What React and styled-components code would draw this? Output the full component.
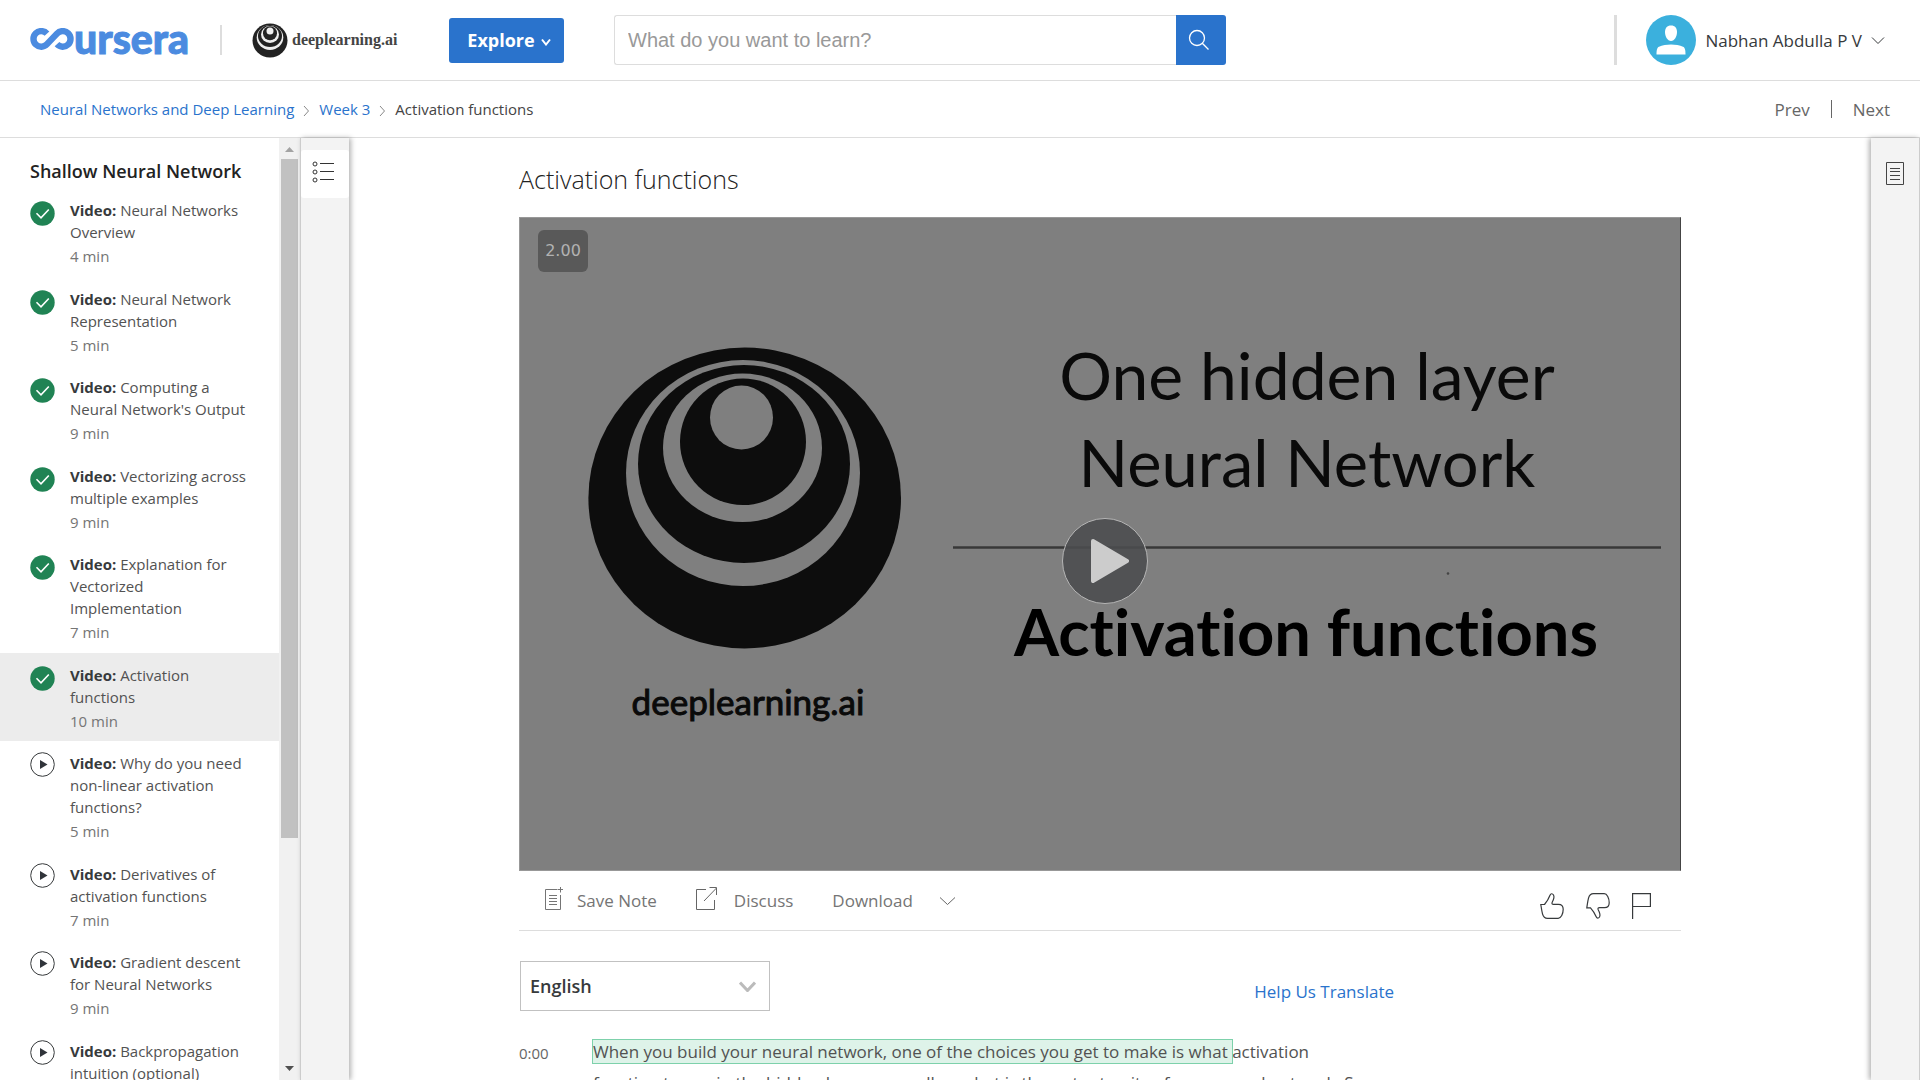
import React from 'react';
import styled, { createGlobalStyle, css } from 'styled-components';

const sans = `'Open Sans', 'Noto Sans', sans-serif`;
const blue = '#2a73cc';

const GlobalStyle = createGlobalStyle`
  *, *::before, *::after { box-sizing: border-box; }
  body { margin: 0; background: #fff; color: #373a3c; font-family: ${sans}; font-size: 15px; }
  button, input, select { font: inherit; margin: 0; }
  button { cursor: pointer; }
  a { text-decoration: none; color: inherit; }
  ul, ol { margin: 0; padding: 0; list-style: none; }
  h1, h2, p { margin: 0; }
  svg { display: block; flex: none; }
`;

const Page = styled.div`
  display: flex;
  flex-direction: column;
  height: 100vh;
  overflow: hidden;
`;

/* Header */
const Header = styled.header`
  display: flex;
  align-items: center;
  flex: none;
  height: 81px;
  padding: 0 35px 0 30px;
  border-bottom: 1px solid #ddd;
`;

const Brand = styled.a`
  display: flex;
  align-items: center;
  width: 160px;
  height: 44px;
  margin-right: 30px;
  padding-bottom: 3px;
  color: #4b8be0;
  font: 900 41px/44px Lato, ${sans};
  -webkit-text-stroke: 1px currentColor;
`;

const Rule = styled.span`
  flex: none;
  width: ${(p) => p.$width}px;
  height: ${(p) => p.$height}px;
  background: ${(p) => p.$color || '#ddd'};
`;

const Partner = styled.a`
  display: flex;
  align-items: center;
  gap: 4px;
  width: 167px;
  margin: 0 30px;
  color: #444;
  font: 700 16px/34px 'Liberation Serif', serif;
`;

const ExploreButton = styled.button`
  display: flex;
  align-items: center;
  justify-content: center;
  gap: 6px;
  width: 115px;
  height: 45px;
  padding: 0 0 0 5px;
  border: 0;
  border-radius: 3px;
  background: ${blue};
  color: #fff;
  font-size: 18px;
  font-weight: 700;
  svg { margin-top: 3px; }
`;

const Search = styled.form`
  display: flex;
  width: 612px;
  height: 50px;
  margin-left: 50px;
`;

const SearchInput = styled.input`
  flex: 1;
  min-width: 0;
  padding: 0 13px;
  border: 1px solid #ddd;
  border-right: 0;
  border-radius: 3px 0 0 3px;
  font-family: 'Liberation Sans', sans-serif;
  font-size: 20px;
  &::placeholder { color: #999; opacity: 1; }
`;

const SearchButton = styled.button`
  display: grid;
  place-items: center;
  width: 50px;
  padding: 0 4px 0 0;
  border: 0;
  border-radius: 0 3px 3px 0;
  background: ${blue};
`;

const Account = styled.button`
  display: flex;
  align-items: center;
  gap: 9px;
  margin-left: 29px;
  padding: 0;
  border: 0;
  background: none;
  color: #373a3c;
  font-size: 17px;
`;

const Spacer = styled.span`
  flex: 1;
`;

/* Breadcrumb bar */
const CrumbBar = styled.div`
  display: flex;
  align-items: center;
  justify-content: space-between;
  flex: none;
  height: 57px;
  padding: 0 30px 0 40px;
  border-bottom: 1px solid #ddd;
`;

const Crumbs = styled.ol`
  display: flex;
  align-items: center;
  gap: 9px;
  color: #444;
  a { color: ${blue}; }
  svg { margin-top: 3px; }
`;

const Pager = styled.nav`
  display: flex;
  align-items: center;
  gap: 21px;
  color: #666;
  font-size: 17px;
`;

/* Body */
const Body = styled.div`
  display: flex;
  flex: 1;
  min-height: 0;
`;

const Sidebar = styled.aside`
  width: 279px;
  flex: none;
  overflow: hidden;
`;

const SidebarTitle = styled.h2`
  padding: 20px 30px 4px;
  color: #222;
  font-size: 18px;
  font-weight: 600;
  line-height: 26px;
  white-space: nowrap;
`;

const Lesson = styled.a`
  display: flex;
  gap: 15px;
  padding: 11px 30px 9px;
  background: ${(p) => (p.$active ? '#ececec' : 'transparent')};
  line-height: 22px;
  color: #525252;
  svg { margin-top: ${(p) => (p.$done ? 2 : 0)}px; }
  strong { color: #373a3c; font-weight: 700; }
`;

const Duration = styled.span`
  display: block;
  margin-top: 2px;
  color: #757575;
  line-height: 1.5;
`;

const Scrollbar = styled.div`
  display: flex;
  flex-direction: column;
  align-items: center;
  justify-content: space-between;
  flex: none;
  width: 21px;
  padding: 9px 0;
  background: #f1f1f1;
`;

const Thumb = styled.span`
  width: 17px;
  height: 73.5%;
  margin: 7px 0 auto;
  background: #c1c1c1;
`;

const Rail = styled.div`
  flex: none;
  position: relative;
  width: 49px;
  padding-top: 12px;
  background: #f3f3f3;
  ${(p) =>
    p.$side === 'left'
      ? css`
          border-left: 1px solid #ccc;
          box-shadow: 2px 0 5px rgba(0, 0, 0, 0.3);
        `
      : css`
          border-right: 1px solid #ccc;
          box-shadow: -2px 0 5px rgba(0, 0, 0, 0.3);
        `}
`;

const RailButton = styled.button`
  display: grid;
  place-items: center;
  width: 48px;
  height: 48px;
  padding: ${(p) => (p.$active ? '0 4px 4px 0' : '0 0 2px')};
  border: 0;
  border-radius: 3px;
  background: ${(p) => (p.$active ? '#fff' : 'transparent')};
`;

const Main = styled.main`
  flex: 1;
  min-width: 0;
  padding: 22px 190px 0 170px;
  overflow: hidden;
`;

const Title = styled.h1`
  margin-bottom: 19px;
  color: #222;
  font-size: 25px;
  font-weight: 300;
  line-height: 38px;
`;

const Player = styled.section`
  position: relative;
  aspect-ratio: 1162 / 654;
  border: 1px solid #989898;
  border-right-color: #444;
  background: #7f7f7f;
  overflow: hidden;
`;

const Slide = styled.svg`
  width: 100%;
  height: 100%;
  font-family: Lato, ${sans};
  font-variant-ligatures: none;
`;

const SpeedBadge = styled.span`
  position: absolute;
  top: 12px;
  left: 18px;
  width: 50px;
  border-radius: 6px;
  background: #595959;
  color: #b2b2b2;
  font: 16px/42px 'DejaVu Sans', sans-serif;
  text-align: center;
`;

const PlayButton = styled.button`
  position: absolute;
  top: calc(50% + 17px);
  left: calc(50% + 5px);
  display: grid;
  place-items: center;
  width: 86px;
  height: 86px;
  margin: -43px;
  padding: 0 0 0 9px;
  border: 1px solid #b5b5b5;
  border-radius: 50%;
  background: rgba(75, 76, 78, 0.88);
`;

const Actions = styled.div`
  display: flex;
  align-items: center;
  height: 60px;
  padding: 0 30px 0 26px;
  border-bottom: 1px solid #ddd;
`;

const Action = styled.button`
  display: flex;
  align-items: center;
  gap: ${(p) => p.$gap}px;
  margin-right: 39px;
  padding: 0;
  border: 0;
  background: none;
  color: #757575;
  font-size: 17px;
  line-height: 24px;
  svg:first-child { margin-bottom: 5px; }
`;

const Feedback = styled.div`
  display: flex;
  gap: 22px;
  margin-left: auto;
  padding-top: 10px;
`;

const IconButton = styled.button`
  padding: 0;
  border: 0;
  background: none;
`;

const Transcript = styled.section`
  padding-top: 30px;
`;

const TranscriptTools = styled.div`
  display: flex;
  align-items: center;
  justify-content: space-between;
  width: 875px;
  max-width: 100%;
  a { padding-top: 10px; color: ${blue}; font-size: 17px; }
`;

const SelectBox = styled.label`
  display: grid;
  align-items: center;
  width: 251px;
  height: 50px;
  padding-left: 1px;
  > * { grid-area: 1 / 1; }
  svg { justify-self: end; margin-right: 14px; pointer-events: none; }
`;

const Select = styled.select`
  appearance: none;
  width: 100%;
  height: 100%;
  padding: 0 9px;
  border: 1px solid #c1c1c1;
  border-radius: 0;
  background: #fff;
  color: #373a3c;
  font-size: 18px;
  font-weight: 600;
`;

const Cue = styled.div`
  display: flex;
  margin-top: 25px;
  line-height: 31px;
  time { width: 74px; flex: none; padding-top: 2px; color: #666; }
  p { width: 784px; color: #525252; font-size: 17px; }
  mark { background: #def3e9; outline: 1px solid #7dd1ab; color: inherit; }
`;

function Chevron({ width, height, color, weight }) {
  return (
    <svg width={width} height={height} viewBox={`0 0 ${width} ${height}`} fill="none" stroke={color} strokeWidth={weight} aria-hidden="true">
      <path d={`M1 1.5L${width / 2} ${height - 1.5}L${width - 1} 1.5`} />
    </svg>
  );
}

const CrumbArrow = () => (
  <svg width="7" height="12" viewBox="0 0 7 12" fill="none" stroke="#888" aria-hidden="true">
    <path d="M1 1l4.500 5L1 11" />
  </svg>
);

const DoneIcon = () => (
  <svg width="25" height="25" viewBox="0 0 25 25" aria-hidden="true">
    <circle cx="12.500" cy="12.500" r="12.200" fill="#208354" />
    <path d="M6.500 12.300l4.500 4.500 7.800-8.300" fill="none" stroke="#fff" strokeWidth="1.600" />
  </svg>
);

const PlayIcon = () => (
  <svg width="25" height="25" viewBox="0 0 25 25" aria-hidden="true">
    <circle cx="12.500" cy="12.500" r="11.800" fill="#fff" stroke="#373a3c" />
    <path d="M10 8l7.500 4.500L10 17z" fill="#30343a" />
  </svg>
);

const lessons = [
  ['Neural Networks Overview', 4, true],
  ['Neural Network Representation', 5, true],
  ["Computing a Neural Network's Output", 9, true],
  ['Vectorizing across multiple examples', 9, true],
  ['Explanation for Vectorized Implementation', 7, true],
  ['Activation functions', 10, true, true],
  ['Why do you need non-linear activation functions?', 5],
  ['Derivatives of activation functions', 7],
  ['Gradient descent for Neural Networks', 9],
  ['Backpropagation intuition (optional)', 16],
];

export default function App() {
  return (
    <Page>
      <GlobalStyle />
      <Header>
        <Brand href="#" aria-label="coursera">
          <svg width="44" height="22" viewBox="0 0 44 22" fill="none" stroke="currentColor" strokeWidth="6.400" aria-hidden="true">
            <path d="M17 5.600A7.800 7.800 0 1 0 17 16.200L27 5.600A7.800 7.800 0 1 1 27 16.200" />
          </svg>
          <span>ursera</span>
        </Brand>
        <Rule $width={2} $height={30} />
        <Partner href="#">
          <svg width="36" height="35" viewBox="0 0 36 35" aria-hidden="true">
            <ellipse cx="18" cy="17.500" rx="17.500" ry="17" fill="#222" />
            <ellipse cx="18" cy="14.500" rx="13.300" ry="12.500" fill="#eee" />
            <ellipse cx="18" cy="13" rx="12" ry="11" fill="#222" />
            <ellipse cx="18" cy="11.500" rx="9" ry="8.500" fill="#eee" />
            <ellipse cx="18" cy="10.300" rx="7" ry="7" fill="#222" />
            <circle cx="18" cy="8" r="3.500" fill="#eee" />
          </svg>
          deeplearning.ai
        </Partner>
        <ExploreButton type="button">
          Explore
          <Chevron width={10} height={8} color="#fff" weight={2} />
        </ExploreButton>
        <Search role="search" onSubmit={(e) => e.preventDefault()}>
          <SearchInput type="search" aria-label="Search" placeholder="What do you want to learn?" />
          <SearchButton type="submit" aria-label="Submit search">
            <svg width="22" height="22" viewBox="0 0 22 22" fill="none" stroke="#fff" strokeWidth="1.300" aria-hidden="true">
              <circle cx="9" cy="9" r="7.500" />
              <path d="M14.300 14.300L20.500 20.500" />
            </svg>
          </SearchButton>
        </Search>
        <Spacer />
        <Rule $width={3} $height={50} />
        <Account type="button">
          <svg width="50" height="50" viewBox="0 0 50 50" aria-hidden="true">
            <circle cx="25" cy="25" r="25" fill="#3bb0dd" />
            <path d="M25 10.500c4 0 6 2.700 6 6.500 0 4.500-2.500 9-6 9s-6-4.500-6-9c0-3.800 2-6.500 6-6.500z" fill="#fff" />
            <path d="M10.500 39.500c0-5 .8-7 2.500-7.800 3-1.400 8-2.200 12-2.200s9 .8 12 2.200c1.700.8 2.500 2.800 2.500 7.800z" fill="#fff" />
          </svg>
          Nabhan Abdulla P V
          <Chevron width={14} height={9} color="#373a3c" weight={1} />
        </Account>
      </Header>

      <CrumbBar>
        <nav aria-label="Breadcrumb">
          <Crumbs>
            <li><a href="#">Neural Networks and Deep Learning</a></li>
            <CrumbArrow />
            <li><a href="#">Week 3</a></li>
            <CrumbArrow />
            <li>Activation functions</li>
          </Crumbs>
        </nav>
        <Pager aria-label="Lesson">
          <a href="#">Prev</a>
          <Rule $width={1} $height={18} $color="#666" />
          <a href="#">Next</a>
        </Pager>
      </CrumbBar>

      <Body>
        <Sidebar>
          <SidebarTitle>Shallow Neural Network</SidebarTitle>
          <ul>
            {lessons.map(([name, minutes, done, active]) => (
              <li key={name}>
                <Lesson href="#" $done={done} $active={active}>
                  {done ? <DoneIcon /> : <PlayIcon />}
                  <span>
                    <strong>Video:</strong> {name}
                    <Duration>{minutes} min</Duration>
                  </span>
                </Lesson>
              </li>
            ))}
          </ul>
        </Sidebar>
        <Scrollbar aria-hidden="true">
          <svg width="9" height="5" viewBox="0 0 9 5"><path d="M0 5L4.500 0L9 5z" fill="#a3a3a3" /></svg>
          <Thumb />
          <svg width="9" height="5" viewBox="0 0 9 5"><path d="M0 0H9L4.500 5z" fill="#505050" /></svg>
        </Scrollbar>
        <Rail $side="left">
          <RailButton type="button" aria-label="Lesson list" $active>
            <svg width="22" height="22" viewBox="0 0 22 22" fill="none" stroke="#333" aria-hidden="true">
              <circle cx="3" cy="3" r="2" /><circle cx="3" cy="11" r="2" /><circle cx="3" cy="19" r="2" />
              <path d="M8 2.500H22M8 10.500H22M8 18.500H22" />
            </svg>
          </RailButton>
        </Rail>

        <Main>
          <Title>Activation functions</Title>
          <Player aria-label="Video player">
            <Slide viewBox="520 218 1160 652">
              <g fill="#0d0d0d">
                <ellipse cx="744.700" cy="498" rx="156.300" ry="150.500" />
                <ellipse cx="743" cy="473" rx="117" ry="113" fill="#7f7f7f" />
                <ellipse cx="744" cy="464" rx="106" ry="99" />
                <ellipse cx="742.500" cy="447.800" rx="79.500" ry="74.300" fill="#7f7f7f" />
                <ellipse cx="743" cy="441.700" rx="63" ry="63.300" />
                <ellipse cx="741.500" cy="417.500" rx="31.500" ry="32" fill="#7f7f7f" />
              </g>
              <g textAnchor="middle" fill="#0a0a0a">
                <text x="748" y="715" fontSize="35" stroke="#0a0a0a" strokeWidth="1">deeplearning.ai</text>
                <text x="1307" y="400" fontSize="66">One hidden layer</text>
                <text x="1307" y="487" fontSize="65">Neural Network</text>
                <text x="1306" y="656" fontSize="65" fontWeight="700" fill="#000">Activation functions</text>
              </g>
              <path d="M953 547.500H1661" stroke="#383838" strokeWidth="2.500" />
              <circle cx="1448" cy="573.500" r="1.300" fill="#444" />
            </Slide>
            <SpeedBadge>2.00</SpeedBadge>
            <PlayButton type="button" aria-label="Play">
              <svg width="38" height="44" viewBox="0 0 38 44" aria-hidden="true">
                <path d="M2 2L36 22L2 42z" fill="#ccc" stroke="#ccc" strokeWidth="4" strokeLinejoin="round" />
              </svg>
            </PlayButton>
          </Player>

          <Actions>
            <Action type="button" $gap={14}>
              <svg width="18" height="23" viewBox="0 0 18 23" fill="none" stroke="#757575" aria-hidden="true">
                <path d="M12 2.500H.500V22.500H15.500V8M4 8.500H12M4 11.500H12M4 14.500H12M4 17.500H12M15.500 0V5.500M12.500 2.500H18" />
              </svg>
              <span>Save Note</span>
            </Action>
            <Action type="button" $gap={17}>
              <svg width="21" height="23" viewBox="0 0 21 23" fill="none" stroke="#666" aria-hidden="true">
                <path d="M10 2.500H.500V22.500H18.500V13M8 14L20.500 1M13.500 .500H20.500V8" />
              </svg>
              <span>Discuss</span>
            </Action>
            <Action type="button" $gap={26}>
              <span>Download</span>
              <Chevron width={17} height={10} color="#666" weight={1} />
            </Action>
            <Feedback>
              <IconButton type="button" aria-label="Like">
                <svg width="24" height="26" viewBox="0 0 24 26" fill="none" stroke="#373a3c" strokeWidth="1.200" aria-hidden="true">
                  <path d="M.800 11.500H4.500C7 8.500 9 5 10 2.300 10.800.300 12.500.300 13.500 2c1.300 2.300-.2 5.300-1.300 7.300-.6 1.300 0 2 1.300 2h5c3 0 4.700 1.700 4.700 5 0 4.700-2.200 9-5 9H7.500c-2.500 0-4.200-1.500-5-4.500-.8-3-1.200-6.300-1.700-9.300z" />
                </svg>
              </IconButton>
              <IconButton type="button" aria-label="Dislike">
                <svg width="24" height="26" viewBox="0 0 24 26" fill="none" stroke="#373a3c" strokeWidth="1.200" aria-hidden="true">
                  <path d="M.800 14.800H4.500C7 17.500 9 21 10.200 23.700c.8 2 2.300 1.700 3.300.3 1.300-2.300-.2-5.300-1.300-7.300-.6-1.300 0-2 1.300-2h5c3 0 4.700-1.700 4.700-5 0-4.700-2.200-9-5-9H7.500c-2.500 0-4.200 1.500-5 4.500-.8 3-1.200 6.600-1.700 9.600z" />
                </svg>
              </IconButton>
              <IconButton type="button" aria-label="Report">
                <svg width="19" height="26" viewBox="0 0 19 26" fill="none" stroke="#373a3c" strokeWidth="1.200" aria-hidden="true">
                  <path d="M.600 26V.600H18.400V13.500H.600" />
                </svg>
              </IconButton>
            </Feedback>
          </Actions>

          <Transcript>
            <TranscriptTools>
              <SelectBox>
                <Select aria-label="Transcript language" defaultValue="English">
                  <option>English</option>
                </Select>
                <Chevron width={17} height={11} color="#bbb" weight={3} />
              </SelectBox>
              <a href="#">Help Us Translate</a>
            </TranscriptTools>
            <Cue>
              <time>0:00</time>
              <p>
                <mark>When you build your neural network, one of the choices you get to make is what </mark>
                activation function to use in the hidden layers, as well as what is the output units of your neural network. So
              </p>
            </Cue>
          </Transcript>
        </Main>

        <Rail $side="right">
          <RailButton type="button" aria-label="Notes">
            <svg width="18" height="23" viewBox="0 0 18 23" fill="none" stroke="#444" aria-hidden="true">
              <path d="M.500 .500H17.500V22.500H.500zM4 6.500H14M4 9.500H14M4 13.500H14M4 17.500H14" />
            </svg>
          </RailButton>
        </Rail>
      </Body>
    </Page>
  );
}
